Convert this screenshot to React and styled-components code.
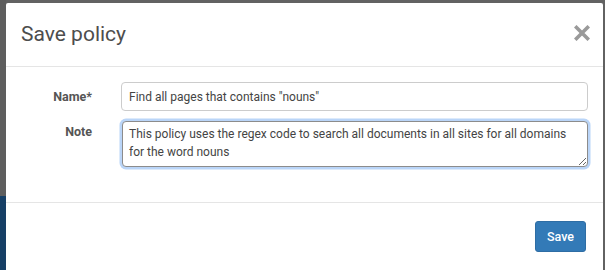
import React from "react";
import styled, { createGlobalStyle } from "styled-components";

const GlobalStyle = createGlobalStyle`
  html, body {
    margin: 0;
    padding: 0;
    background: #626262;
    overflow: hidden;
  }
  body {
    font-family: Roboto, "Liberation Sans", Arial, sans-serif;
  }
`;

const Backdrop = styled.div`
  display: flex;
  width: 605px;
  height: 270px;
  overflow: hidden;
`;

const Edge = styled.div`
  width: 6px;
  flex: none;
  display: flex;
  flex-direction: column;
`;

const EdgePart = styled.div`
  height: ${(p) => p.h || "auto"};
  flex: ${(p) => (p.h ? "none" : "1")};
  background: ${(p) => p.color};
`;

const Modal = styled.div`
  margin-top: 3px;
  width: 597px;
  flex: none;
  background: #fff;
  border-radius: 2px 2px 0 0;
  display: flex;
  flex-direction: column;
  height: 300px;
`;

const Header = styled.div`
  height: 63px;
  display: flex;
  align-items: center;
  justify-content: space-between;
  padding: 0 13px 0 15px;
  border-bottom: 1px solid #e5e5e5;
`;

const Title = styled.h4`
  margin: -2px 0 0;
  font-size: 21px;
  font-weight: 400;
  color: #4d4d4d;
`;

const Close = styled.button`
  border: 0;
  background: none;
  padding: 0;
  width: 16px;
  height: 16px;
  margin-top: -3px;
  cursor: pointer;
  display: flex;
`;

const Body = styled.div`
  padding: 15px 15px 35px 0;
  display: grid;
  grid-template-columns: 86px 1fr;
  column-gap: 29px;
  row-gap: 9px;
  border-bottom: 1px solid #e5e5e5;
`;

const Label = styled.label`
  justify-self: end;
  font-size: 12.5px;
  font-weight: 700;
  color: #555;
  padding-top: ${(p) => p.top || "7px"};
`;

const Input = styled.input`
  box-sizing: border-box;
  width: 100%;
  height: 29px;
  margin: 0;
  padding: 0 7px;
  border: 1px solid #ccc;
  border-radius: 4px;
  font-family: Roboto, "Liberation Sans", Arial, sans-serif;
  font-size: 12px;
  color: #444;
  outline: none;
`;

const TextArea = styled.textarea`
  box-sizing: border-box;
  display: block;
  width: 466px;
  height: 46px;
  margin: 1px 0 0 1px;
  padding: 3px 6px;
  border: 1px solid #8c8c8c;
  border-radius: 4px;
  box-shadow: 0 0 0 2.5px #bad5f8;
  font-family: Roboto, "Liberation Sans", Arial, sans-serif;
  font-size: 12px;
  line-height: 18px;
  color: #444;
  outline: none;
  resize: both;
`;

const Footer = styled.div`
  display: flex;
  justify-content: flex-end;
  padding: 18px 17px 0 0;
`;

const Button = styled.button`
  width: 51px;
  height: 31px;
  border: 1px solid #2e6da4;
  border-radius: 3px;
  background: #337ab7;
  color: #fff;
  font-family: Roboto, "Liberation Sans", Arial, sans-serif;
  font-size: 12.5px;
  font-weight: 500;
  padding: 0;
  cursor: pointer;
`;

function CloseIcon() {
  return (
    <svg width="16" height="16" viewBox="0 0 16 16">
      <path
        d="M2.5 2.5 L13.5 13.5 M13.5 2.5 L2.5 13.5"
        stroke="#9a9a9a"
        strokeWidth="3.6"
        strokeLinecap="square"
      />
    </svg>
  );
}

export default function App() {
  return (
    <>
      <GlobalStyle />
      <Backdrop>
        <Edge>
          <EdgePart h="196px" color="#5e5e5e" />
          <EdgePart color="#163f66" />
        </Edge>
        <Modal>
          <Header>
            <Title>Save policy</Title>
            <Close aria-label="Close">
              <CloseIcon />
            </Close>
          </Header>
          <Body>
            <Label htmlFor="name">Name*</Label>
            <Input id="name" defaultValue={'Find all pages that contains "nouns"'} />
            <Label htmlFor="note" top="4px">Note</Label>
            <TextArea
              id="note"
              defaultValue="This policy uses the regex code to search all documents in all sites for all domains for the word nouns"
            />
          </Body>
          <Footer>
            <Button>Save</Button>
          </Footer>
        </Modal>
      </Backdrop>
    </>
  );
}
